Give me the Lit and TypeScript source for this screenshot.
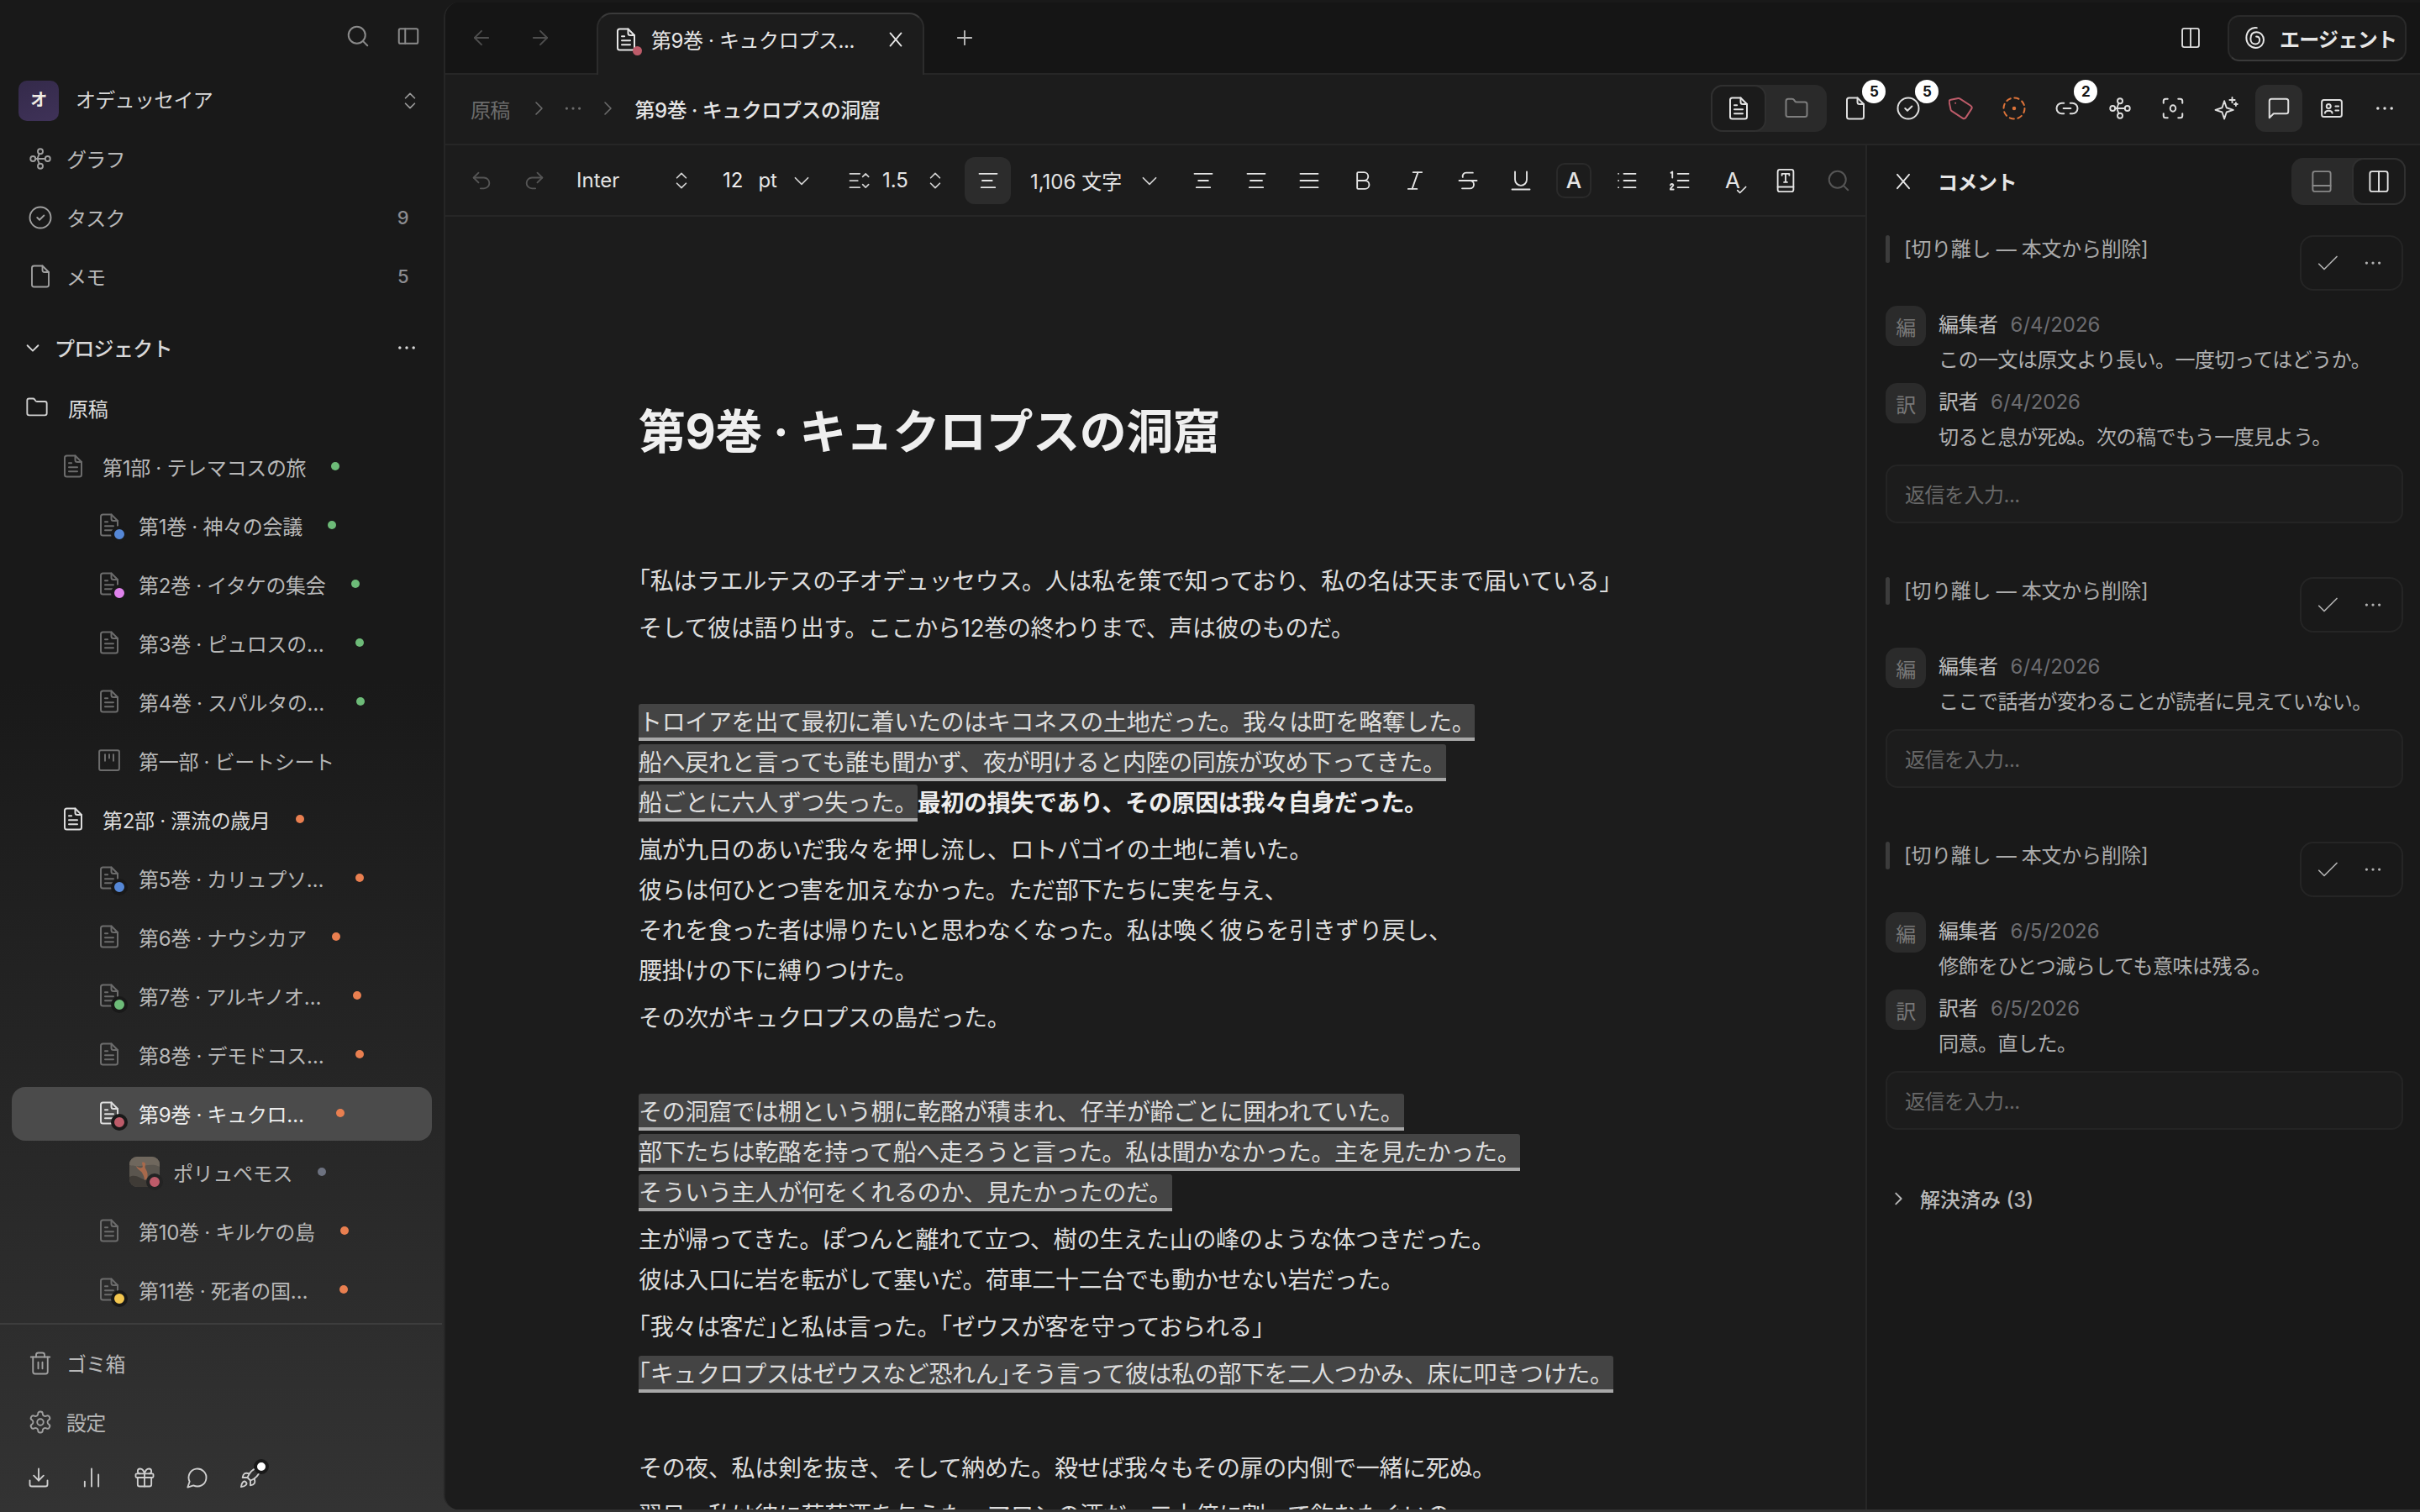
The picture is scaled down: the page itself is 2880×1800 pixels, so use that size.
import { LitElement, html, css, svg, nothing } from 'lit';
import { customElement } from 'lit/decorators.js';

const paths: Record<string, unknown> = {
  search: svg`<circle cx="11" cy="11" r="8"/><path d="m21 21-4.3-4.3"/>`,
  panel: svg`<rect x="3" y="5" width="18" height="14" rx="1.5"/><path d="M9 5v14"/>`,
  updown: svg`<path d="m7 15 5 5 5-5"/><path d="m7 9 5-5 5 5"/>`,
  graph: svg`<circle cx="12" cy="5" r="2.4"/><circle cx="12" cy="19" r="2.4"/><circle cx="5" cy="12" r="2.4"/><circle cx="19" cy="12" r="2.4"/><path d="M7.4 12h9.2M11 7.2 9.2 12M11 16.8 9.2 12"/>`,
  task: svg`<circle cx="12" cy="12" r="10"/><path d="m9 12 2.2 2.2L15.5 10"/>`,
  file: svg`<path d="M14 2H6a2 2 0 0 0-2 2v16a2 2 0 0 0 2 2h12a2 2 0 0 0 2-2V8z"/><path d="M14 2v4a2 2 0 0 0 2 2h4"/>`,
  doc: svg`<path d="M14 2H6a2 2 0 0 0-2 2v16a2 2 0 0 0 2 2h12a2 2 0 0 0 2-2V8z"/><path d="M14 2v4a2 2 0 0 0 2 2h4"/><path d="M8 9h2.5M8 13h8M8 17h8"/>`,
  folder: svg`<path d="M20 20a2 2 0 0 0 2-2V8a2 2 0 0 0-2-2h-7.9a2 2 0 0 1-1.69-.9L9.6 3.9A2 2 0 0 0 7.93 3H4a2 2 0 0 0-2 2v13a2 2 0 0 0 2 2Z"/>`,
  down: svg`<path d="m5 9 7 7 7-7"/>`,
  right: svg`<path d="m9 5 7 7-7 7"/>`,
  board: svg`<rect x="2.5" y="2.5" width="19" height="19" rx="1.5"/><path d="M8 6.5v6M12 6.5v3.5M16 6.5v6"/>`,
  trash: svg`<path d="M3 6h18"/><path d="M8 6V4a2 2 0 0 1 2-2h4a2 2 0 0 1 2 2v2"/><path d="M19 6v14a2 2 0 0 1-2 2H7a2 2 0 0 1-2-2V6"/><path d="M10 11v6M14 11v6"/>`,
  gear: svg`<path d="M12.22 2h-.44a2 2 0 0 0-2 2v.18a2 2 0 0 1-1 1.73l-.43.25a2 2 0 0 1-2 0l-.15-.08a2 2 0 0 0-2.73.73l-.22.38a2 2 0 0 0 .73 2.73l.15.1a2 2 0 0 1 1 1.72v.51a2 2 0 0 1-1 1.74l-.15.09a2 2 0 0 0-.73 2.73l.22.38a2 2 0 0 0 2.73.73l.15-.08a2 2 0 0 1 2 0l.43.25a2 2 0 0 1 1 1.73V20a2 2 0 0 0 2 2h.44a2 2 0 0 0 2-2v-.18a2 2 0 0 1 1-1.73l.43-.25a2 2 0 0 1 2 0l.15.08a2 2 0 0 0 2.73-.73l.22-.39a2 2 0 0 0-.73-2.73l-.15-.08a2 2 0 0 1-1-1.74v-.5a2 2 0 0 1 1-1.74l.15-.09a2 2 0 0 0 .73-2.73l-.22-.38a2 2 0 0 0-2.73-.73l-.15.08a2 2 0 0 1-2 0l-.43-.25a2 2 0 0 1-1-1.73V4a2 2 0 0 0-2-2z"/><circle cx="12" cy="12" r="3"/>`,
  download: svg`<path d="M21 15v4a2 2 0 0 1-2 2H5a2 2 0 0 1-2-2v-4"/><path d="m7 10 5 5 5-5"/><path d="M12 15V3"/>`,
  bars: svg`<path d="M5 21v-5M12 21V3M19 21V9"/>`,
  gift: svg`<rect x="3" y="8" width="18" height="4" rx="1"/><path d="M12 8v13"/><path d="M19 12v7a2 2 0 0 1-2 2H7a2 2 0 0 1-2-2v-7"/><path d="M7.5 8a2.5 2.5 0 0 1 0-5A4.8 8 0 0 1 12 8a4.8 8 0 0 1 4.5-5 2.5 2.5 0 0 1 0 5"/>`,
  bubble: svg`<path d="M7.9 20A9 9 0 1 0 4 16.1L2 22Z"/>`,
  rocket: svg`<path d="M4.5 16.5c-1.5 1.26-2 5-2 5s3.74-.5 5-2c.71-.84.7-2.13-.09-2.91a2.18 2.18 0 0 0-2.91-.09z"/><path d="m12 15-3-3a22 22 0 0 1 2-3.95A12.88 12.88 0 0 1 22 2c0 2.72-.78 7.5-6 11a22.35 22.35 0 0 1-4 2z"/><path d="M9 12H4s.55-3.03 2-4c1.62-1.08 5 0 5 0"/><path d="M12 15v5s3.03-.55 4-2c1.08-1.62 0-5 0-5"/>`,
  back: svg`<path d="m12 19-7-7 7-7"/><path d="M19 12H5"/>`,
  forward: svg`<path d="M5 12h14"/><path d="m12 5 7 7-7 7"/>`,
  close: svg`<path d="M18 5 6 19"/><path d="m6 5 12 14"/>`,
  plus: svg`<path d="M5 12h14"/><path d="M12 5v14"/>`,
  undo: svg`<path d="M9 14 4 9l5-5"/><path d="M4 9h10.5a5.5 5.5 0 0 1 0 11H11"/>`,
  redo: svg`<path d="m15 14 5-5-5-5"/><path d="M20 9H9.5a5.5 5.5 0 0 0 0 11H13"/>`,
  lineheight: svg`<path d="M3 5h10M3 12h8M3 19h10"/><path d="m16 8 3-3 3 3"/><path d="m16 16 3 3 3-3"/>`,
  alignleft: svg`<path d="M3 5h18M6 12h10M5 19h14"/>`,
  aligncenter: svg`<path d="M3 5h18M7 12h10M5 19h14"/>`,
  alignright: svg`<path d="M3 5h18M6 12h12M5 19h14"/>`,
  justify: svg`<path d="M3 5h18M3 12h18M3 19h18"/>`,
  bold: svg`<path d="M7 12h8a4 4 0 0 1 0 8.5H8a1 1 0 0 1-1-1V4.5a1 1 0 0 1 1-1h6a4.2 4.2 0 0 1 0 8.5"/>`,
  italic: svg`<path d="M19 3.5h-9M14 20.5H5M15 3.5 9 20.5"/>`,
  strike: svg`<path d="M17 4H10a3.5 3.5 0 0 0-3.3 4.5"/><path d="M14 12a4 4 0 0 1 0 8H6"/><path d="M3 12h18"/>`,
  underline: svg`<path d="M6 3v8a6 6 0 0 0 12 0V3"/><path d="M3 21h18"/>`,
  list: svg`<path d="M9 5h12M9 12h12M9 19h12"/><path d="M3.5 5h.01M3.5 12h.01M3.5 19h.01"/>`,
  ordered: svg`<path d="M10 5h11M10 12h11M10 19h11"/><path d="M3 4l1.5-1v6M2.5 16.5a1.6 1.6 0 0 1 3 0c0 1.2-3 2.5-3 4.5h3.2"/>`,
  check: svg`<path d="M20 6 9 17l-5-5"/>`,
  smallcheck: svg`<path d="m3 13 5 5L20 6"/>`,
  book: svg`<rect x="4.5" y="1.5" width="15" height="21" rx="2"/><path d="M4.5 18h15"/><path d="M8.5 7V5.5h7V7M12 5.5v8M10.5 13.5h3"/>`,
  tag: svg`<path d="M12.586 2.586A2 2 0 0 0 11.172 2H4a2 2 0 0 0-2 2v7.172a2 2 0 0 0 .586 1.414l8.704 8.704a2.426 2.426 0 0 0 3.42 0l6.58-6.58a2.426 2.426 0 0 0 0-3.42z" transform="rotate(-12 12 12)"/><path d="M6.5 7h.01"/>`,
  dashed: svg`<circle cx="12" cy="12" r="10" stroke-dasharray="4.2 3.65"/><circle cx="12" cy="12" r="1" fill="currentColor"/>`,
  link: svg`<path d="M9 17H7A5 5 0 0 1 7 7h2"/><path d="M15 7h2a5 5 0 1 1 0 10h-2"/><path d="M8.5 12h7"/>`,
  share: svg`<circle cx="12" cy="5" r="2.4"/><circle cx="12" cy="19" r="2.4"/><circle cx="5" cy="12" r="2.4"/><circle cx="19" cy="12" r="2.4"/><path d="M7.4 12h9.2M10.8 7 9 12M10.8 17 9 12"/>`,
  focus: svg`<path d="M3 7V5a2 2 0 0 1 2-2h2M17 3h2a2 2 0 0 1 2 2v2M21 17v2a2 2 0 0 1-2 2h-2M7 21H5a2 2 0 0 1-2-2v-2"/><ellipse cx="12" cy="12" rx="2.6" ry="3"/>`,
  sparkle: svg`<path d="M10.5 5 12.6 11.4 19 13.5 12.6 15.6 10.5 22 8.4 15.6 2 13.5 8.4 11.4Z"/><path d="M18 1.5v5M15.5 4h5M21.5 6.5v3M20 8h3"/>`,
  comment: svg`<path d="M21 15a2 2 0 0 1-2 2H7l-4 4V5a2 2 0 0 1 2-2h14a2 2 0 0 1 2 2z"/>`,
  card: svg`<rect x="2.5" y="4" width="19" height="16" rx="2"/><circle cx="9" cy="10" r="2"/><path d="M5.5 16.5c.5-3 6.5-3 7 0"/><path d="M15.5 10h3M15.5 14h3"/>`,
  split: svg`<rect x="3.5" y="2.5" width="17" height="19" rx="2"/><path d="M12 2.5v19"/>`,
  bottom: svg`<rect x="3.5" y="2.5" width="17" height="19" rx="2"/><path d="M3.5 16h17"/>`,
  spiral: svg`<path d="M13.5 2.5C8 1.5 3.5 6 3.5 12c0 5.5 4 9.5 9 9.5 4.6 0 7.5-3.5 7.5-7.5S17 6.5 13 6.5 7.5 9.6 7.5 13s2.2 5 4.6 5 4-1.8 4-4-1.3-3.3-3.2-3.3"/>`,
  dots: svg`<circle cx="5" cy="12" r="1.5" fill="currentColor" stroke="none"/><circle cx="12" cy="12" r="1.5" fill="currentColor" stroke="none"/><circle cx="19" cy="12" r="1.5" fill="currentColor" stroke="none"/>`,
};

// every icon goes through here so they share one stroke look
function ic(name: string, size = 28, sw = 1.7) {
  return html`<svg class="i" width=${size} height=${size} viewBox="0 0 24 24" fill="none" stroke="currentColor" stroke-width=${sw} stroke-linecap="round" stroke-linejoin="round">${paths[name]}</svg>`;
}

const base = css`
  :host {
    font-family: Inter, "Noto Sans CJK JP", sans-serif;
    letter-spacing: -0.7px;
  }
  * { box-sizing: border-box; }
  svg.i { display: block; flex: none; }
`;

type Row = { label: string; depth: number; icon?: string; dot?: string; badge?: string; strong?: boolean; selected?: boolean; thumb?: boolean };

const GREEN = '#6dbb78';
const ORANGE = '#e97f50';

const rows: Row[] = [
  { label: '原稿', depth: 0, icon: 'folder', strong: true },
  { label: '第1部 · テレマコスの旅', depth: 1, dot: GREEN },
  { label: '第1巻 · 神々の会議', depth: 2, dot: GREEN, badge: '#5587d6' },
  { label: '第2巻 · イタケの集会', depth: 2, dot: GREEN, badge: '#df82ec' },
  { label: '第3巻 · ピュロスの…', depth: 2, dot: GREEN },
  { label: '第4巻 · スパルタの…', depth: 2, dot: GREEN },
  { label: '第一部 · ビートシート', depth: 2, icon: 'board' },
  { label: '第2部 · 漂流の歳月', depth: 1, dot: ORANGE, strong: true },
  { label: '第5巻 · カリュプソ…', depth: 2, dot: ORANGE, badge: '#5587d6' },
  { label: '第6巻 · ナウシカア', depth: 2, dot: ORANGE },
  { label: '第7巻 · アルキノオ…', depth: 2, dot: ORANGE, badge: GREEN },
  { label: '第8巻 · デモドコス…', depth: 2, dot: ORANGE },
  { label: '第9巻 · キュクロ…', depth: 2, dot: ORANGE, badge: '#bd5b69', selected: true },
  { label: 'ポリュペモス', depth: 3, dot: '#6d7280', badge: '#bd5b69', thumb: true },
  { label: '第10巻 · キルケの島', depth: 2, dot: ORANGE },
  { label: '第11巻 · 死者の国…', depth: 2, dot: ORANGE, badge: '#f3c64f' },
];

@customElement('app-sidebar')
class AppSidebar extends LitElement {
  static styles = [base, css`
    :host { display: flex; flex-direction: column; width: 528px; height: 1800px; flex: none; color: #b8b8b8; font-size: 24px; }
    .top { display: flex; justify-content: flex-end; align-items: center; gap: 30px; height: 85px; padding-right: 27px; color: #8a8a8a; }
    .ws { display: flex; align-items: center; height: 69px; padding: 0 27px 0 22px; color: #d8d8d8; }
    .ws .ava { width: 48px; height: 48px; border-radius: 10px; background: linear-gradient(160deg, #342a4a, #3f3258); color: #f0ece4; font-size: 20px; font-weight: 700; display: flex; align-items: center; justify-content: center; margin-right: 20px; padding-bottom: 4px; }
    .ws .name { flex: 1; padding-bottom: 5px; }
    .ws svg { color: #9a9a9a; }
    .nav { display: flex; align-items: center; height: 70px; padding: 0 42px 1px 33px; gap: 16px; }
    .nav svg { color: #a0a0a0; }
    .nav .lbl { flex: 1; }
    .nav .n { color: #8c8c90; font-size: 22px; font-weight: 500; }
    .proj { display: flex; align-items: center; height: 70px; margin-top: 15px; padding: 0 30px 1px 28px; color: #d8d8d8; font-weight: 500; gap: 15px; }
    .proj .lbl { flex: 1; }
    .list { flex: 1; overflow: hidden; margin-top: 2px; }
    .row { display: flex; align-items: center; height: 64px; margin: 3px 14px 6px; padding-bottom: 2px; border-radius: 16px; white-space: nowrap; letter-spacing: -0.3px; }
    .row.selected { background: #4b4b4b; color: #ededed; }
    .row.strong { color: #dcdcdc; }
    .row .doc { position: relative; flex: none; color: #6c6c6c; margin-right: 20px; }
    .row.strong .doc, .row.selected .doc { color: #dcdcdc; }
    .row.d0 { padding-left: 16px; }
    .row.d1 { padding-left: 58px; }
    .row.d2 { padding-left: 101px; }
    .row.d3 { padding-left: 140px; }
    .row .doc.folder { margin-right: 23px; color: #d0d0d0; }
    .row .doc .bd { position: absolute; right: -7px; bottom: -6px; width: 20px; height: 20px; border-radius: 50%; border: 4px solid #191919; }
    .row .dot { width: 10px; height: 10px; border-radius: 50%; margin-left: 30px; flex: none; }
    .row .dot.cut { margin-left: 38px; }
    .thumb { position: relative; width: 36px; height: 36px; margin-right: 16px; flex: none; }
    .thumb svg { display: block; border-radius: 9px; }
    .thumb .bd { position: absolute; right: -4px; bottom: -4px; width: 20px; height: 20px; border-radius: 50%; border: 4px solid #232323; }
    .foot { border-top: 2px solid #3d3d3d; margin-right: 2px; padding: 11px 0 10px; }
    .tools { display: flex; align-items: center; gap: 35px; padding: 0 0 0 32px; height: 62px; color: #cfcfcf; }
    .tools .rk { position: relative; }
    .tools .rk i { position: absolute; right: -8px; top: -8px; border-radius: 50%; background: #fff; border: 4px solid #191919; box-sizing: content-box; width: 10px; height: 10px; }
  `];

  renderRow(r: Row) {
    const cls = `row d${r.depth}${r.selected ? ' selected' : ''}${r.strong ? ' strong' : ''}`;
    const lead = r.thumb
      ? html`<span class="thumb">
          <svg width="36" height="36" viewBox="0 0 36 36">
            <rect width="36" height="36" fill="#5a554e"/>
            <path d="M0 0h36v12C26 6 14 14 0 10z" fill="#6f675d"/>
            <path d="M0 24c8-4 12 2 20 4s10 0 16 0v8H0z" fill="#3f3b36"/>
            <path d="M15 7c2-1 4 0 4 2s-1 3 0 5 4 6 2 12l-3 2c0-4-2-7-3-9s-6-4-7-8c2 2 5 3 7 2s0-3 0-6z" fill="#a8694b"/>
          </svg>
          <i class="bd" style="background:${r.badge}"></i>
        </span>`
      : html`<span class="doc ${r.icon === 'folder' ? 'folder' : ''}">
          ${ic(r.icon ?? 'doc', r.icon === 'folder' ? 28 : 30, 1.6)}
          ${r.badge ? html`<i class="bd" style="background:${r.badge}"></i>` : nothing}
        </span>`;
    return html`<div class=${cls}>
      ${lead}
      <span>${r.label}</span>
      ${r.dot ? html`<i class="dot ${r.label.endsWith('…') ? 'cut' : ''}" style="background:${r.dot}"></i>` : nothing}
    </div>`;
  }

  render() {
    return html`
      <div class="top">${ic('search', 30, 1.6)}${ic('panel', 30, 1.6)}</div>
      <div class="ws"><span class="ava">オ</span><span class="name">オデュッセイア</span>${ic('updown', 26, 1.6)}</div>
      <div class="nav">${ic('graph', 30, 1.5)}<span class="lbl">グラフ</span></div>
      <div class="nav">${ic('task', 30, 1.5)}<span class="lbl">タスク</span><span class="n">9</span></div>
      <div class="nav">${ic('file', 30, 1.5)}<span class="lbl">メモ</span><span class="n">5</span></div>
      <div class="proj">${ic('down', 22, 2)}<span class="lbl">プロジェクト</span>${ic('dots', 28, 1.6)}</div>
      <div class="list">${rows.map((r) => this.renderRow(r))}</div>
      <div class="foot">
        <div class="nav">${ic('trash', 30, 1.5)}<span class="lbl">ゴミ箱</span></div>
        <div class="nav">${ic('gear', 30, 1.5)}<span class="lbl">設定</span></div>
        <div class="tools">
          ${ic('download', 28, 1.6)}${ic('bars', 28, 1.6)}${ic('gift', 28, 1.6)}${ic('bubble', 28, 1.6)}
          <span class="rk">${ic('rocket', 28, 1.6)}<i></i></span>
        </div>
      </div>
    `;
  }
}

type Line = { mark?: string; bold?: string; text?: string };

const body: Line[][] = [
  [{ text: '「私はラエルテスの子オデュッセウス。人は私を策で知っており、私の名は天まで届いている」' }],
  [{ text: 'そして彼は語り出す。ここから12巻の終わりまで、声は彼のものだ。' }],
  [],
  [{ mark: 'トロイアを出て最初に着いたのはキコネスの土地だった。我々は町を略奪した。' }, { mark: '船へ戻れと言っても誰も聞かず、夜が明けると内陸の同族が攻め下ってきた。' }, { mark: '船ごとに六人ずつ失った。', bold: '最初の損失であり、その原因は我々自身だった。' }],
  [{ text: '嵐が九日のあいだ我々を押し流し、ロトパゴイの土地に着いた。' }, { text: '彼らは何ひとつ害を加えなかった。ただ部下たちに実を与え、' }, { text: 'それを食った者は帰りたいと思わなくなった。私は喚く彼らを引きずり戻し、' }, { text: '腰掛けの下に縛りつけた。' }],
  [{ text: 'その次がキュクロプスの島だった。' }],
  [],
  [{ mark: 'その洞窟では棚という棚に乾酪が積まれ、仔羊が齢ごとに囲われていた。' }, { mark: '部下たちは乾酪を持って船へ走ろうと言った。私は聞かなかった。主を見たかった。' }, { mark: 'そういう主人が何をくれるのか、見たかったのだ。' }],
  [{ text: '主が帰ってきた。ぽつんと離れて立つ、樹の生えた山の峰のような体つきだった。' }, { text: '彼は入口に岩を転がして塞いだ。荷車二十二台でも動かせない岩だった。' }],
  [{ text: '「我々は客だ」と私は言った。「ゼウスが客を守っておられる」' }],
  [{ mark: '「キュクロプスはゼウスなど恐れん」そう言って彼は私の部下を二人つかみ、床に叩きつけた。' }],
  [],
  [{ text: 'その夜、私は剣を抜き、そして納めた。殺せば我々もその扉の内側で一緒に死ぬ。' }],
  [{ text: '翌日、私は彼に葡萄酒を与えた。マロンの酒だ。二十倍に割って飲むたぐいの' }],
];

// the reference sets 「」 at half width
const jp = (s: string) => s.split(/([「」])/).map((p) => (p === '「' || p === '」' ? html`<span class="hw">${p}</span>` : p));

@customElement('doc-editor')
class DocEditor extends LitElement {
  static styles = [base, css`
    :host { display: flex; flex-direction: column; flex: 1; min-width: 0; background: #1c1c1c; color: #e0e0e0; }
    .bar { display: flex; align-items: center; height: 85px; flex: none; border-bottom: 2px solid #262626; padding-left: 15px; color: #e4e4e4; font-size: 24px; letter-spacing: 0; }
    .btn { width: 56px; height: 56px; display: flex; align-items: center; justify-content: center; flex: none; border-radius: 12px; margin-right: 7px; }
    .off { color: #555; }
    .active { background: #2c2c2c; }
    .sel { display: flex; align-items: center; flex: none; }
    .sel .grow { flex: 1; }
    .s-font { width: 138px; margin-left: 15px; }
    .s-size { width: 107px; margin-left: 36px; }
    .s-lh { width: 118px; margin-left: 41px; gap: 14px; }
    .btn.a-left { width: 55px; margin-left: 22px; margin-right: 0; }
    .s-count { width: 155px; margin-left: 23px; margin-right: 23px; }
    .s-size b { font-weight: 400; margin-right: 18px; }
    .sel svg { color: #d0d0d0; }
    .abox { border: 2px solid #2a2a2a; width: 42px; height: 42px; margin: 0 14px 0 7px; border-radius: 10px; font-size: 26px; font-weight: 500; }
    .spell { position: relative; font-size: 26px; }
    .spell svg { position: absolute; right: 10px; bottom: 10px; }
    .doc { flex: 1; overflow: hidden; padding: 216px 0 0 230px; letter-spacing: -0.35px; }
    h1 { margin: 0 0 114px; font-size: 56px; line-height: 80px; font-weight: 700; color: #efefef; letter-spacing: -0.4px; }
    p { margin: 0 0 8px; font-size: 28px; line-height: 48px; min-height: 48px; white-space: nowrap; color: #dcdcdc; }
    mark { background: #444; color: #dcdcdc; border-bottom: 4px solid #a8a8a8; padding: 5px 0 1px; border-radius: 3px 3px 0 0; }
    b { font-weight: 700; color: #ededed; }
    .hw { font-feature-settings: "halt"; }
  `];

  render() {
    return html`
      <div class="bar">
        <span class="btn off">${ic('undo', 28, 1.6)}</span>
        <span class="btn off">${ic('redo', 28, 1.6)}</span>
        <span class="sel s-font"><span class="grow">Inter</span>${ic('updown', 26, 1.6)}</span>
        <span class="sel s-size"><b>12</b><span class="grow">pt</span>${ic('down', 26, 1.6)}</span>
        <span class="sel s-lh">${ic('lineheight', 28, 1.5)}<span class="grow">1.5</span>${ic('updown', 26, 1.6)}</span>
        <span class="btn active a-left">${ic('alignleft', 28, 1.6)}</span>
        <span class="sel s-count"><span class="grow">1,106 文字</span>${ic('down', 26, 1.6)}</span>
        <span class="btn">${ic('aligncenter', 28, 1.6)}</span>
        <span class="btn">${ic('alignright', 28, 1.6)}</span>
        <span class="btn">${ic('justify', 28, 1.6)}</span>
        <span class="btn">${ic('bold', 28, 1.6)}</span>
        <span class="btn">${ic('italic', 28, 1.6)}</span>
        <span class="btn">${ic('strike', 28, 1.6)}</span>
        <span class="btn">${ic('underline', 28, 1.6)}</span>
        <span class="btn abox">A</span>
        <span class="btn">${ic('list', 28, 1.6)}</span>
        <span class="btn">${ic('ordered', 28, 1.6)}</span>
        <span class="btn spell">A${ic('smallcheck', 14, 3)}</span>
        <span class="btn">${ic('book', 30, 1.5)}</span>
        <span class="btn off">${ic('search', 30, 1.6)}</span>
      </div>
      <div class="doc">
        <h1>第9巻 · キュクロプスの洞窟</h1>
        ${body.map((para) => html`<p>${para.map((l, i) => html`${i ? html`<br>` : nothing}${l.mark ? html`<mark>${jp(l.mark)}</mark>` : nothing}${l.bold ? html`<b>${l.bold}</b>` : nothing}${l.text ? jp(l.text) : nothing}`)}</p>`)}
      </div>
    `;
  }
}

const threads = [
  [{ a: '編', who: '編集者', date: '6/4/2026', text: 'この一文は原文より長い。一度切ってはどうか。' }, { a: '訳', who: '訳者', date: '6/4/2026', text: '切ると息が死ぬ。次の稿でもう一度見よう。' }],
  [{ a: '編', who: '編集者', date: '6/4/2026', text: 'ここで話者が変わることが読者に見えていない。' }],
  [{ a: '編', who: '編集者', date: '6/5/2026', text: '修飾をひとつ減らしても意味は残る。' }, { a: '訳', who: '訳者', date: '6/5/2026', text: '同意。直した。' }],
];

@customElement('comment-panel')
class CommentPanel extends LitElement {
  static styles = [base, css`
    :host { display: block; width: 660px; flex: none; background: #191919; border-left: 2px solid #262626; font-size: 24px; color: #b4b4b4; overflow: hidden; letter-spacing: -0.5px; }
    .head { display: flex; align-items: center; height: 85px; padding: 0 17px 0 29px; gap: 27px; color: #e6e6e6; }
    .head .t { flex: 1; font-weight: 600; }
    .seg { display: flex; width: 136px; height: 56px; border-radius: 14px; background: #2a2a2a; }
    .seg span { flex: 1; display: flex; align-items: center; justify-content: center; color: #888; }
    .seg span.on { flex: none; width: 64px; background: #1a1a1a; border: 2px solid #303030; border-radius: 14px; color: #e6e6e6; }
    .threads { padding: 22px 20px 0 22px; }
    .thread { margin-bottom: 64px; }
    .qrow { display: flex; align-items: flex-start; margin-bottom: 18px; }
    .bar { width: 5px; height: 33px; background: #3c3c3c; border-radius: 3px; margin-right: 17px; }
    .q { flex: 1; line-height: 34px; color: #aaa; letter-spacing: -0.3px; }
    .acts { width: 123px; height: 66px; border: 2px solid #252525; border-radius: 16px; display: flex; align-items: center; justify-content: space-around; padding: 0 8px 0 4px; color: #b0b0b0; }
    .c { display: flex; height: 92px; gap: 15px; }
    .ava { width: 48px; height: 48px; flex: none; border-radius: 14px; background: #2b2b2b; color: #777; display: flex; align-items: center; justify-content: center; }
    .who { display: flex; gap: 15px; line-height: 46px; color: #bdbdbd; }
    .date { color: #6c6c70; letter-spacing: 0; }
    .txt { line-height: 40px; color: #b0b0b0; margin-top: -1px; }
    .reply { height: 70px; margin-top: 5px; background: #1c1c1c; border: 2px solid #242424; border-radius: 14px; color: #686868; display: flex; align-items: center; padding-left: 21px; padding-bottom: 2px; }
    .res { display: flex; align-items: center; gap: 15px; margin: 6px 0 0 4px; color: #b8b8b8; font-weight: 500; letter-spacing: 0; }
  `];

  render() {
    return html`
      <div class="head">
        ${ic('close', 28, 1.6)}<span class="t">コメント</span>
        <span class="seg"><span>${ic('bottom', 30, 1.5)}</span><span class="on">${ic('split', 30, 1.5)}</span></span>
      </div>
      <div class="threads">
        ${threads.map((t) => html`<div class="thread">
          <div class="qrow">
            <i class="bar"></i><span class="q">[切り離し — 本文から削除]</span>
            <span class="acts">${ic('smallcheck', 30, 1.4)}${ic('dots', 26, 1.6)}</span>
          </div>
          ${t.map((c) => html`<div class="c">
            <span class="ava">${c.a}</span>
            <div><div class="who"><span>${c.who}</span><span class="date">${c.date}</span></div><div class="txt">${c.text}</div></div>
          </div>`)}
          <div class="reply">返信を入力...</div>
        </div>`)}
        <div class="res">${ic('right', 22, 2)}<span>解決済み (3)</span></div>
      </div>
    `;
  }
}

@customElement('app-root')
export class AppRoot extends LitElement {
  static styles = [base, css`
    :host { display: flex; width: 2880px; height: 1800px; overflow: hidden; background: linear-gradient(180deg, #191919 0%, #191919 45%, #333 100%); color: #e0e0e0; font-size: 24px; }
    .main { flex: 1; min-width: 0; display: flex; flex-direction: column; margin: 3px 0 3px 0; border-left: 2px solid #262626; border-radius: 18px 0 0 18px; overflow: hidden; background: #1c1c1c; }
    .tabs { display: flex; align-items: flex-end; height: 86px; flex: none; background: #151515; border-bottom: 2px solid #262626; padding-left: 15px; }
    .tabs .nav { display: flex; align-self: center; color: #4e4e4e; }
    .tabs .nav span { width: 56px; height: 56px; margin-right: 14px; display: flex; align-items: center; justify-content: center; }
    .tab { display: flex; align-items: center; width: 390px; height: 74px; margin: 0 0 -2px 25px; padding: 0 19px 13px 18px; background: #1c1c1c; border: 2px solid #2c2c2c; border-bottom: none; border-top-color: #3a3a3a; border-radius: 18px 18px 0 0; color: #e6e6e6; letter-spacing: -0.4px; }
    .tab .d { position: relative; margin-right: 15px; flex: none; }
    .tab .d i { position: absolute; right: -4px; bottom: -4px; width: 11px; height: 11px; border-radius: 50%; background: #bd5b69; }
    .tab .l { flex: 1; white-space: nowrap; }
    .plus { align-self: center; margin-left: 34px; color: #bcbcbc; }
    .tabs .sp { flex: 1; }
    .split { align-self: center; color: #dcdcdc; margin-right: 30px; }
    .agent { align-self: center; display: flex; align-items: center; gap: 14px; width: 213px; height: 55px; margin-right: 16px; padding-left: 16px; border: 2px solid #2a2a2a; border-bottom-color: #3a3a3a; border-radius: 14px; background: #1b1b1b; font-weight: 600; color: #e6e6e6; white-space: nowrap; }
    .crumbs { display: flex; align-items: center; height: 84px; flex: none; background: #1c1c1c; border-bottom: 2px solid #262626; padding: 0 14px 2px 30px; color: #6b6b6b; }
    .crumbs .c { display: flex; align-items: center; gap: 16px; flex: 1; }
    .crumbs .home { margin-right: 6px; }
    .crumbs .cur { color: #e4e4e4; font-weight: 500; margin-left: 5px; white-space: nowrap; letter-spacing: -0.5px; }
    .dseg { display: flex; width: 138px; height: 56px; border-radius: 14px; background: #2a2a2a; margin-right: 6px; flex: none; }
    .dseg span { flex: 1; display: flex; align-items: center; justify-content: center; color: #7e7e7e; }
    .dseg .on { flex: none; width: 66px; background: #1b1b1b; border: 2px solid #303030; border-radius: 14px; color: #e4e4e4; }
    .t { position: relative; width: 56px; height: 56px; margin-right: 7px; display: flex; align-items: center; justify-content: center; flex: none; border-radius: 12px; color: #dedede; }
    .t:last-child { margin-right: 0; }
    .t.on { background: #2c2c2c; }
    .t.red { color: #bd5b69; }
    .t.org { color: #dd7339; }
    .t u { position: absolute; left: 36px; top: -6px; width: 28px; height: 28px; border-radius: 50%; background: #fff; color: #151515; font-size: 17px; font-weight: 700; text-decoration: none; display: flex; align-items: center; justify-content: center; }
    .body { flex: 1; display: flex; min-height: 0; }
  `];

  render() {
    return html`
      <app-sidebar></app-sidebar>
      <div class="main">
        <div class="tabs">
          <div class="nav"><span>${ic('back', 28, 1.6)}</span><span>${ic('forward', 28, 1.6)}</span></div>
          <div class="tab">
            <span class="d">${ic('doc', 30, 1.6)}<i></i></span>
            <span class="l">第9巻 · キュクロプス...</span>
            ${ic('close', 26, 1.7)}
          </div>
          <span class="plus">${ic('plus', 28, 1.6)}</span>
          <span class="sp"></span>
          <span class="split">${ic('split', 28, 1.6)}</span>
          <div class="agent">${ic('spiral', 30, 1.6)}<span>エージェント</span></div>
        </div>
        <div class="crumbs">
          <div class="c">
            <span class="home">原稿</span>${ic('right', 24, 1.6)}${ic('dots', 26, 1.6)}${ic('right', 24, 1.6)}<span class="cur">第9巻 · キュクロプスの洞窟</span>
          </div>
          <div class="dseg"><span class="on">${ic('doc', 30, 1.6)}</span><span>${ic('folder', 30, 1.6)}</span></div>
          <span class="t">${ic('file', 30, 1.6)}<u>5</u></span>
          <span class="t">${ic('task', 30, 1.6)}<u>5</u></span>
          <span class="t red">${ic('tag', 30, 1.6)}</span>
          <span class="t org">${ic('dashed', 30, 1.6)}</span>
          <span class="t">${ic('link', 30, 1.6)}<u>2</u></span>
          <span class="t">${ic('share', 30, 1.5)}</span>
          <span class="t">${ic('focus', 30, 1.6)}</span>
          <span class="t">${ic('sparkle', 30, 1.5)}</span>
          <span class="t on">${ic('comment', 30, 1.6)}</span>
          <span class="t">${ic('card', 30, 1.6)}</span>
          <span class="t">${ic('dots', 28, 1.6)}</span>
        </div>
        <div class="body">
          <doc-editor></doc-editor>
          <comment-panel></comment-panel>
        </div>
      </div>
    `;
  }
}
